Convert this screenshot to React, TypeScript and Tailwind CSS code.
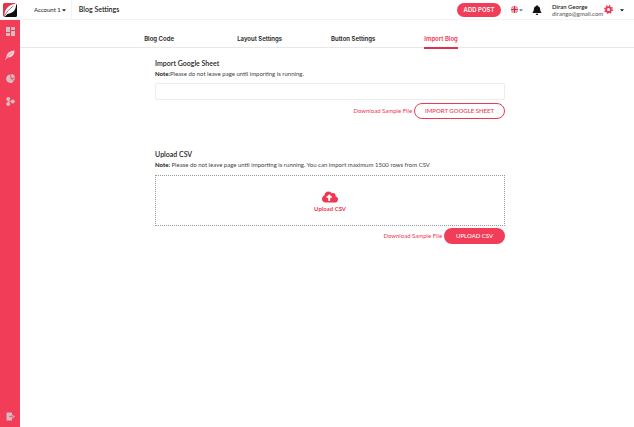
import { FaBell, FaCaretDown, FaCloudUploadAlt } from "react-icons/fa";

const tabs = [
  { name: "Blog Code", active: false },
  { name: "Layout Settings", active: false },
  { name: "Button Settings", active: false },
  { name: "Import Blog", active: true },
];

function Logo() {
  return (
    <svg viewBox="0 0 28 28" className="h-3.5 w-3.5" aria-hidden="true">
      <path d="M3 0h23L2 27a3 3 0 0 1-2-3V3a3 3 0 0 1 3-3z" fill="#e8334c" />
      <path d="M28 2v23a3 3 0 0 1-3 3H3z" fill="#111" />
      <path d="M3 27C2 14 9 4 26 1c1 10-4 20-18 21z" fill="#fff" />
      <path d="M2 28C7 18 13 11 21 6" stroke="#444" strokeWidth="1.3" fill="none" />
    </svg>
  );
}

function GridIcon() {
  return (
    <svg viewBox="0 0 18 18" className="h-[9px] w-[9px]" fill="currentColor" aria-hidden="true">
      <path d="M0 0h8v10H0zM10 0h8v6h-8zM0 12h8v6H0zM10 8h8v10h-8z" />
    </svg>
  );
}

function FeatherIcon() {
  return (
    <svg viewBox="0 0 20 20" className="h-2.5 w-2.5 text-[#fbd3d8]" aria-hidden="true">
      <path d="M3 16C2 8 8 2 19 1c0 8-4 14-13 14z" fill="currentColor" />
      <path d="M1 19C5 13 9 9 15 5" stroke="currentColor" strokeWidth="2" fill="none" />
      <path d="M5 14c3-4 6-6 9-8" stroke="#f23d58" strokeWidth="1" fill="none" />
    </svg>
  );
}

function ChartIcon() {
  return (
    <svg viewBox="0 0 18 18" className="h-[9px] w-[9px]" fill="currentColor" aria-hidden="true">
      <path d="M9 1v8l7 5A8.500 8.500 0 1 1 9 1z" />
      <path d="M10.500 0a8 8 0 0 1 7.500 7.500h-7.500z" />
      <path d="M11 9h7l-1.500 4z" />
    </svg>
  );
}

function NodesIcon() {
  return (
    <svg viewBox="0 0 18 18" className="h-[9px] w-[9px]" fill="currentColor" aria-hidden="true">
      <circle cx="4.500" cy="4" r="4" />
      <circle cx="13.500" cy="9" r="4" />
      <circle cx="4.500" cy="14" r="4" />
      <path d="M4.500 4v10M4.500 9h9" stroke="currentColor" strokeWidth="1.5" />
    </svg>
  );
}

function ExitIcon() {
  return (
    <svg viewBox="0 0 18 18" className="h-[9px] w-[9px]" fill="currentColor" aria-hidden="true">
      <path d="M2 1h9a1 1 0 0 1 1 1v3L18 9l-6 4v3a1 1 0 0 1-1 1H2a1 1 0 0 1-1-1V2a1 1 0 0 1 1-1z" />
      <path d="M6 8h5V5.500L15 9l-4 3.500V10H6z" fill="#f0627a" />
    </svg>
  );
}

function Flag() {
  return (
    <svg viewBox="0 0 14 14" className="h-[7px] w-[7px]" aria-hidden="true">
      <clipPath id="flag">
        <circle cx="7" cy="7" r="7" />
      </clipPath>
      <g clipPath="url(#flag)">
        <path d="M0 0h14v14H0z" fill="#8c86a5" />
        <path d="M0 0l14 14M14 0L0 14" stroke="#ee8d99" strokeWidth="3" />
        <path d="M7 0v14M0 7h14" stroke="#fff" strokeWidth="5" />
        <path d="M7 0v14M0 7h14" stroke="#e0213c" strokeWidth="3" />
      </g>
    </svg>
  );
}

function GearIcon() {
  return (
    <svg viewBox="0 0 20 20" className="h-[9px] w-[9px]" fill="none" stroke="#ef3752" aria-hidden="true">
      <circle cx="10" cy="10" r="5.500" strokeWidth="4" />
      <circle cx="10" cy="10" r="8.500" strokeWidth="3" strokeDasharray="3.340 3.340" />
    </svg>
  );
}

const links = [
  { label: "Dashboard", Icon: GridIcon },
  { label: "Posts", Icon: FeatherIcon },
  { label: "Analytics", Icon: ChartIcon },
  { label: "Integrations", Icon: NodesIcon },
];

function Header() {
  return (
    <header className="flex h-5 items-center border-b border-[#f3f3f3] text-[#222]">
      <a href="#home" aria-label="Home" className="flex w-5 shrink-0 justify-center">
        <Logo />
      </a>
      <button className="ml-3.5 flex items-center text-[6px] leading-2">
        Account 1
        <FaCaretDown className="h-1.5 w-1.5" />
      </button>
      <h1 className="ml-1 flex h-full items-center border-l border-[#f3f3f3] pl-[7px] text-[7px] font-semibold">
        Blog Settings
      </h1>
      <div className="ml-auto flex items-center pr-[9px]">
        <button className="h-3.5 w-11 rounded-full bg-[#f23d58] font-['Inter',sans-serif] text-[6px] font-semibold leading-2 text-white">
          ADD POST
        </button>
        <button aria-label="Language" className="ml-2.5 flex items-center text-[#4f83c4]">
          <Flag />
          <FaCaretDown className="h-1.5 w-1.5" />
        </button>
        <button aria-label="Notifications" className="ml-2 text-[#111]">
          <FaBell className="h-2.5 w-2.5" />
        </button>
        <div className="ml-2.5 w-[52px] whitespace-nowrap text-[6px] leading-[7px]">
          <p className="font-semibold">Diran George</p>
          <p className="text-[#555]">dirango@gmail.com</p>
        </div>
        <button aria-label="Settings">
          <GearIcon />
        </button>
        <button aria-label="Profile menu" className="ml-1.5 text-[#111]">
          <FaCaretDown className="h-1.5 w-1.5" />
        </button>
      </div>
    </header>
  );
}

function Sidebar() {
  return (
    <aside className="flex w-5 shrink-0 flex-col items-center justify-between bg-[#f23d58] pt-[7px] pb-1.5 text-[#d6bcc1]">
      <nav className="flex flex-col items-center gap-3.5">
        {links.map(({ label, Icon }) => (
          <a key={label} href="#" aria-label={label}>
            <Icon />
          </a>
        ))}
      </nav>
      <a href="#logout" aria-label="Log out">
        <ExitIcon />
      </a>
    </aside>
  );
}

export default function App() {
  return (
    <div className="flex min-h-screen flex-col bg-white font-['Lato',sans-serif]">
      <Header />
      <div className="flex grow">
        <Sidebar />
        <div className="grow">
          <nav className="flex h-7 justify-center gap-[49px] border-b border-[#e8e8e8] pr-[52px] font-['Inter',sans-serif]">
            {tabs.map((tab) => (
              <a
                key={tab.name}
                href="#"
                className={`-mb-0.5 flex items-center whitespace-nowrap border-b-2 pt-2.5 text-[6px] font-semibold leading-2 ${
                  tab.active
                    ? "border-[#e0304b] text-[#ef3752]"
                    : "min-w-11 border-transparent text-[#222]"
                }`}
              >
                {tab.name}
              </a>
            ))}
          </nav>

          <main className="ml-[22%] w-[57%] pt-2.5 text-[6px] leading-2 text-[#444]">
            <section>
              <h2 className="text-[7px] font-semibold leading-2.5 text-[#222]">
                <label htmlFor="sheet">Import Google Sheet</label>
              </h2>
              <p className="mt-0.5">
                <strong className="text-[#111]">Note:</strong>Please do not leave page until importing is running.
              </p>
              <input
                id="sheet"
                type="text"
                className="mt-[5px] block h-[17px] w-full rounded-xs border border-[#ececec] px-1.5 outline-none"
              />
              <div className="mt-[3px] flex items-center justify-end gap-0.5 text-[#ef3752]">
                <a href="#sheet-sample">Download Sample File</a>
                <button className="h-4 w-[91px] rounded-full border border-[#ef3752] font-medium">
                  IMPORT GOOGLE SHEET
                </button>
              </div>
            </section>

            <section className="mt-[30px]">
              <h2 className="text-[7px] font-semibold leading-2.5 text-[#222]">Upload CSV</h2>
              <p className="mt-0.5">
                <strong className="text-[#111]">Note:</strong> Please do not leave page until importing is running. You
                can import maximum 1500 rows from CSV
              </p>
              <label className="mt-1.5 flex h-[51px] cursor-pointer flex-col items-center justify-center border border-dotted border-[#999] font-bold text-[#ef3752]">
                <FaCloudUploadAlt className="h-4 w-4" />
                Upload CSV
                <input type="file" accept=".csv" className="sr-only" />
              </label>
              <div className="mt-0.5 flex items-center justify-end gap-0.5 text-[#ef3752]">
                <a href="#csv-sample">Download Sample File</a>
                <button className="h-4 w-[61px] rounded-full bg-[#f23d58] font-medium text-white">UPLOAD CSV</button>
              </div>
            </section>
          </main>
        </div>
      </div>
    </div>
  );
}
